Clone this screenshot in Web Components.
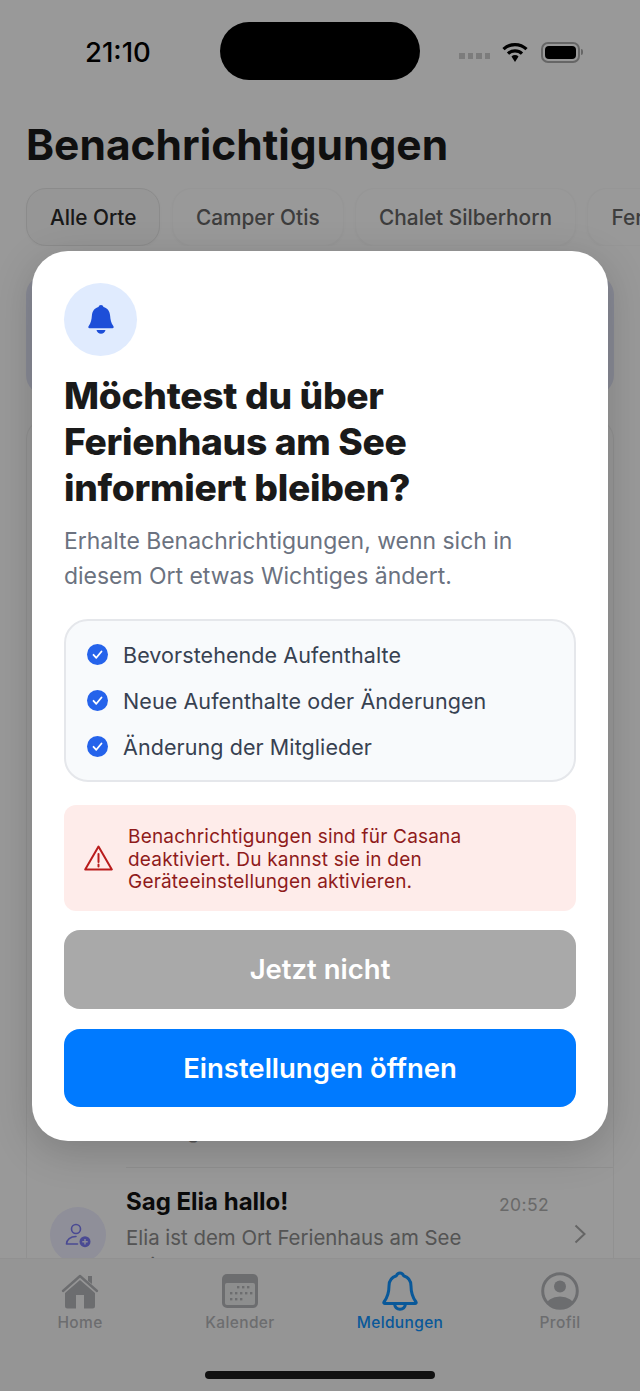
<!DOCTYPE html>
<html lang="de">
<head>
    <meta charset="UTF-8">
    <meta name="viewport" content="width=device-width, initial-scale=1.0">
    <title>Benachrichtigungen</title>
    <style>
        html, body { margin: 0; padding: 0; background: #fff; }
        body { font-family: Inter, "Liberation Sans", sans-serif; }
    </style>
</head>
<body>

    <app-screen>
        <status-bar></status-bar>
        <page-title>Benachrichtigungen</page-title>
        <filter-bar>
            <filter-chip active>Alle Orte</filter-chip>
            <filter-chip>Camper Otis</filter-chip>
            <filter-chip>Chalet Silberhorn</filter-chip>
            <filter-chip>Ferienhaus am See</filter-chip>
        </filter-bar>
        <notification-list>
            <notification-row style="--row-height: 747px" body="Montag"></notification-row>
            <notification-row title="Sag Elia hallo!" time="20:52" body="Elia ist dem Ort Ferienhaus am See beigetreten." icon></notification-row>
        </notification-list>
        <tab-bar slot="tabs">
            <tab-item label="Home" icon="home"></tab-item>
            <tab-item label="Kalender" icon="calendar"></tab-item>
            <tab-item label="Meldungen" icon="bell" active></tab-item>
            <tab-item label="Profil" icon="profile"></tab-item>
        </tab-bar>
        <permission-dialog slot="dialog">
            <span slot="title">Möchtest du über Ferienhaus am See informiert bleiben?</span>
            <span slot="text">Erhalte Benachrichtigungen, wenn sich in diesem Ort etwas Wichtiges ändert.</span>
            <check-item slot="checks">Bevorstehende Aufenthalte</check-item>
            <check-item slot="checks">Neue Aufenthalte oder Änderungen</check-item>
            <check-item slot="checks">Änderung der Mitglieder</check-item>
            <span slot="warning">Benachrichtigungen sind für Casana deaktiviert. Du kannst sie in den Geräteeinstellungen aktivieren.</span>
            <action-button slot="actions" kind="muted">Jetzt nicht</action-button>
            <action-button slot="actions" kind="primary">Einstellungen öffnen</action-button>
        </permission-dialog>
    </app-screen>

    <script>
        const ICONS = {
            home: `<svg width="38" height="36" viewBox="0 0 38 36">
                <path d="M27 3h4v8l-4-3z" fill="currentColor"/>
                <path d="M2 18 19 3l17 15" fill="none" stroke="currentColor" stroke-width="2.4" stroke-linecap="round" stroke-linejoin="round"/>
                <path fill-rule="evenodd" d="M19 7 34 20v13a2.500 2.500 0 0 1-2.500 2.500h-25A2.500 2.500 0 0 1 4 33V20zM15 22v13.500h8V22z" fill="currentColor"/>
            </svg>`,
            calendar: `<svg width="36" height="34" viewBox="0 0 36 34">
                <rect width="36" height="34" rx="5" fill="currentColor"/>
                <rect x="3" y="9" width="30" height="22" rx="2" fill="#eceded"/>
                <g fill="currentColor">
                    <rect x="15" y="12" width="2.400" height="2.400"/><rect x="20" y="12" width="2.400" height="2.400"/><rect x="25" y="12" width="2.400" height="2.400"/>
                    <rect x="8" y="18" width="2.400" height="2.400"/><rect x="13" y="18" width="2.400" height="2.400"/><rect x="18" y="18" width="2.400" height="2.400"/><rect x="23" y="18" width="2.400" height="2.400"/><rect x="28" y="18" width="2.400" height="2.400"/>
                    <rect x="8" y="24" width="2.400" height="2.400"/><rect x="13" y="24" width="2.400" height="2.400"/><rect x="18" y="24" width="2.400" height="2.400"/>
                </g>
            </svg>`,
            bell: `<svg width="36" height="40" viewBox="0 0 36 40" fill="none" stroke="currentColor" stroke-width="3" stroke-linejoin="round">
                <path d="M18 2c2 0 3 1.200 3.600 2.800C26.500 6.300 29 10 29 15c0 8 2 12 5 16 .5.800 0 1.600-.9 1.600H2.900c-.9 0-1.400-.8-.9-1.600 3-4 5-8 5-16 0-5 2.500-8.700 7.400-10.200C15 3.200 16 2 18 2z"/>
                <path d="M12.500 33c.5 3.200 2.800 5.200 5.500 5.200s5-2 5.500-5.200"/>
            </svg>`,
            profile: `<svg width="38" height="38" viewBox="0 0 38 38">
                <defs><clipPath id="c"><circle cx="19" cy="19" r="17"/></clipPath></defs>
                <circle cx="19" cy="14.500" r="6" fill="currentColor"/>
                <ellipse cx="19" cy="34" rx="14" ry="9.500" fill="currentColor" clip-path="url(#c)"/>
                <circle cx="19" cy="19" r="17.300" fill="none" stroke="currentColor" stroke-width="3"/>
            </svg>`
        };

        class AppScreen extends HTMLElement {
            constructor() {
                super();
                this.attachShadow({ mode: 'open' });
                this.shadowRoot.innerHTML = `
                    <style>
                        :host {
                            display: block;
                            position: relative;
                            width: 640px;
                            height: 1391px;
                            overflow: hidden;
                            background: #fff;
                            color: #111;
                        }
                        .page {
                            display: flex;
                            flex-direction: column;
                            height: 100%;
                        }
                        .content {
                            flex: 1;
                            min-height: 0;
                            overflow: hidden;
                        }
                        .overlay {
                            position: absolute;
                            inset: 0;
                            display: flex;
                            align-items: center;
                            justify-content: center;
                            padding: 0 32px;
                            background: rgba(0, 0, 0, 0.4);
                        }
                        .overlay ::slotted(*) { flex: 1; }
                        .island {
                            position: absolute;
                            left: 220px;
                            top: 22px;
                            width: 200px;
                            height: 58px;
                            border-radius: 29px;
                            background: #000;
                        }
                        .indicator {
                            position: absolute;
                            left: 205px;
                            bottom: 12px;
                            width: 230px;
                            height: 8px;
                            border-radius: 4px;
                            background: #111;
                        }
                    </style>
                    <div class="page">
                        <div class="content"><slot></slot></div>
                        <slot name="tabs"></slot>
                    </div>
                    <div class="overlay"><slot name="dialog"></slot></div>
                    <div class="island"></div>
                    <div class="indicator"></div>
                `;
            }
        }

        class StatusBar extends HTMLElement {
            constructor() {
                super();
                this.attachShadow({ mode: 'open' });
                this.shadowRoot.innerHTML = `
                    <style>
                        :host {
                            display: flex;
                            align-items: center;
                            height: 104px;
                            padding-left: 85px;
                            box-sizing: border-box;
                        }
                        .time {
                            font-size: 27.500px;
                            font-weight: 500;
                            color: #000;
                            width: 374px;
                        }
                        .icons { display: flex; align-items: center; }
                        .signal { display: flex; gap: 3px; margin-right: 12px; margin-top: 8px; }
                        .signal i { width: 5.500px; height: 6px; background: #cfcfcf; }
                        .wifi { margin-right: 13px; display: block; }
                        .battery {
                            width: 39px;
                            height: 21px;
                            box-sizing: border-box;
                            border: 2px solid #aaa;
                            border-radius: 7px;
                            padding: 2px;
                        }
                        .battery b { display: block; height: 100%; background: #000; border-radius: 4px; }
                        .nub { width: 2px; height: 6px; background: #aaa; border-radius: 0 2px 2px 0; margin-left: 1px; }
                    </style>
                    <div class="time">21:10</div>
                    <div class="icons">
                        <div class="signal"><i></i><i></i><i></i><i></i></div>
                        <svg class="wifi" width="26" height="20" viewBox="0 0 26 20" fill="none" stroke="#000" stroke-width="3.200">
                            <path d="M1.500 7.200a16.500 16.500 0 0 1 23 0"/>
                            <path d="M6 11.700a10 10 0 0 1 14 0"/>
                            <path d="M9.500 14.500 13 20l3.500-5.500a5 5 0 0 0-7 0z" fill="#000" stroke="none"/>
                        </svg>
                        <div class="battery"><b></b></div>
                        <div class="nub"></div>
                    </div>
                `;
            }
        }

        class PageTitle extends HTMLElement {
            constructor() {
                super();
                this.attachShadow({ mode: 'open' });
                this.shadowRoot.innerHTML = `
                    <style>
                        :host {
                            display: block;
                            padding: 14px 26px 0;
                            font-size: 42.500px;
                            line-height: 54px;
                            font-weight: 700;
                            color: #1a1a1a;
                        }
                    </style>
                    <slot></slot>
                `;
            }
        }

        class FilterBar extends HTMLElement {
            constructor() {
                super();
                this.attachShadow({ mode: 'open' });
                this.shadowRoot.innerHTML = `
                    <style>
                        :host {
                            display: flex;
                            gap: 11.500px;
                            margin-top: 16px;
                            padding-left: 26px;
                            overflow: hidden;
                        }
                    </style>
                    <slot></slot>
                `;
            }
        }

        class FilterChip extends HTMLElement {
            constructor() {
                super();
                this.attachShadow({ mode: 'open' });
                this.shadowRoot.innerHTML = `
                    <style>
                        :host {
                            display: flex;
                            flex: none;
                            align-items: center;
                            height: 58px;
                            box-sizing: border-box;
                            padding: 0 23px;
                            border: 1px solid #fafafa;
                            border-radius: 20px;
                            background: #fff;
                            box-shadow: 0 1px 3px rgba(0, 0, 0, 0.03);
                            font-size: 20.800px;
                            font-weight: 500;
                            color: #666;
                        }
                        :host([active]) {
                            background: #fafafa;
                            border-color: #e8e8e8;
                            color: #2a2a2a;
                        }
                    </style>
                    <slot></slot>
                `;
            }
        }

        class NotificationList extends HTMLElement {
            constructor() {
                super();
                this.attachShadow({ mode: 'open' });
                this.shadowRoot.innerHTML = `
                    <style>
                        :host {
                            display: block;
                            margin: 29px 26px 0;
                        }
                        .banner {
                            height: 120px;
                            border-radius: 20px;
                            background: #e3e6f8;
                        }
                        .card {
                            margin-top: 24px;
                            border: 1px solid #f2f2f2;
                            border-bottom: 0;
                            border-radius: 20px 20px 0 0;
                        }
                    </style>
                    <div class="banner"></div>
                    <div class="card"><slot></slot></div>
                `;
            }
        }

        class NotificationRow extends HTMLElement {
            constructor() {
                super();
                this.attachShadow({ mode: 'open' });
                const title = this.getAttribute('title') || '';
                const time = this.getAttribute('time') || '';
                const body = this.getAttribute('body') || '';
                const icon = this.hasAttribute('icon') ? `
                    <div class="icon">
                        <svg width="30" height="30" viewBox="0 0 30 30" fill="none" stroke="#7c7cf5" stroke-width="1.600">
                            <circle cx="13" cy="9" r="4.500"/>
                            <path d="M3.500 24c0-4.500 4-7.500 9.500-7.500M3.500 24h11" stroke-linecap="round"/>
                            <circle cx="22" cy="21.700" r="5.500" fill="#7c7cf5" stroke="none"/>
                            <path d="M22 19v5.400M19.300 21.700h5.400" stroke="#e8e8ff" stroke-width="1.400"/>
                        </svg>
                    </div>` : '<div class="icon-space"></div>';
                const chevron = this.hasAttribute('icon') ? `
                    <svg class="chevron" width="12" height="20" viewBox="0 0 12 20" fill="none" stroke="#a8a8a8" stroke-width="2">
                        <path d="M1.500 1.500 10.500 10l-9 8.500"/>
                    </svg>` : '';
                this.shadowRoot.innerHTML = `
                    <style>
                        :host {
                            display: flex;
                            align-items: center;
                            min-height: var(--row-height, 132px);
                            padding-left: 23px;
                        }
                        .icon, .icon-space {
                            flex: none;
                            width: 56px;
                            height: 56px;
                            border-radius: 50%;
                            margin-right: 20px;
                            display: flex;
                            align-items: center;
                            justify-content: center;
                        }
                        .icon { background: #eeeeff; }
                        .wrap {
                            position: relative;
                            display: flex;
                            flex: 1;
                            min-width: 0;
                            align-self: stretch;
                        }
                        :host(:not(:first-child)) .wrap { border-top: 1px solid #f0f0f0; }
                        .main {
                            flex: 1;
                            display: flex;
                            flex-direction: column;
                            justify-content: flex-end;
                            min-width: 0;
                            padding: 18px 0 22px;
                        }
                        .head {
                            display: flex;
                            justify-content: space-between;
                            align-items: baseline;
                            line-height: 32px;
                            margin-bottom: 4px;
                            padding-right: 64px;
                        }
                        .title { font-size: 24px; font-weight: 700; color: #111; }
                        .time { font-size: 17.500px; color: #b0b0b0; letter-spacing: .4px; position: relative; top: 1px; }
                        .body {
                            font-size: 20.400px;
                            line-height: 28px;
                            color: #8c8c8c;
                            padding-right: 120px;
                        }
                        .chevron { position: absolute; right: 27px; top: 50%; margin-top: -11px; }
                    </style>
                    ${icon}
                    <div class="wrap">
                        <div class="main">
                            ${title ? `<div class="head"><span class="title">${title}</span><span class="time">${time}</span></div>` : ''}
                            <div class="body">${body}</div>
                        </div>
                        ${chevron}
                    </div>
                `;
            }
        }

        class TabBar extends HTMLElement {
            constructor() {
                super();
                this.attachShadow({ mode: 'open' });
                this.shadowRoot.innerHTML = `
                    <style>
                        :host {
                            display: grid;
                            grid-template-columns: repeat(4, 1fr);
                            height: 133px;
                            box-sizing: border-box;
                            padding-top: 12px;
                            background: #f9f9f9;
                            border-top: 1px solid #f2f2f2;
                        }
                    </style>
                    <slot></slot>
                `;
            }
        }

        class TabItem extends HTMLElement {
            constructor() {
                super();
                this.attachShadow({ mode: 'open' });
                const label = this.getAttribute('label');
                const icon = ICONS[this.getAttribute('icon')];
                this.shadowRoot.innerHTML = `
                    <style>
                        :host {
                            display: flex;
                            flex-direction: column;
                            align-items: center;
                            color: #b5b6ba;
                        }
                        :host([active]) { color: #0f93ff; }
                        .glyph {
                            height: 40px;
                            display: flex;
                            align-items: center;
                            justify-content: center;
                        }
                        .label {
                            margin-top: 1px;
                            font-size: 15.500px;
                            line-height: 22px;
                            font-weight: 450;
                            letter-spacing: .35px;
                        }
                    </style>
                    <div class="glyph">${icon}</div>
                    <div class="label">${label}</div>
                `;
            }
        }

        class PermissionDialog extends HTMLElement {
            constructor() {
                super();
                this.attachShadow({ mode: 'open' });
                this.shadowRoot.innerHTML = `
                    <style>
                        :host {
                            display: block;
                            box-sizing: border-box;
                            margin-top: 1px;
                            padding: 32px 32px 34px;
                            background: #fff;
                            border-radius: 36px;
                            box-shadow: 0 10px 40px rgba(0, 0, 0, 0.18);
                        }
                        .badge {
                            width: 73px;
                            height: 73px;
                            border-radius: 50%;
                            background: #e0ebfe;
                            display: flex;
                            align-items: center;
                            justify-content: center;
                        }
                        h2 {
                            margin: 17px 0 0;
                            max-width: 400px;
                            font-size: 37.200px;
                            line-height: 46px;
                            font-weight: 800;
                            letter-spacing: -0.3px;
                            color: #1a1a1a;
                        }
                        p {
                            margin: 13px 0 0;
                            font-size: 22.950px;
                            line-height: 35px;
                            color: #6b7280;
                        }
                        .checks {
                            margin-top: 25px;
                            padding: 11px 21px 10px;
                            border: 2px solid #e5e7eb;
                            border-radius: 24px;
                            background: #f8fafc;
                        }
                        .warning {
                            margin-top: 23px;
                            display: flex;
                            align-items: center;
                            gap: 15px;
                            padding: 21px 50px 17px 20px;
                            border-radius: 12px;
                            background: #feecea;
                            font-size: 19px;
                            line-height: 22.670px;
                            letter-spacing: .2px;
                            color: #8f1b1b;
                        }
                        .warning svg { flex: none; position: relative; top: -2px; }
                        .actions {
                            margin-top: 19px;
                            display: flex;
                            flex-direction: column;
                            gap: 20px;
                        }
                    </style>
                    <div class="badge">
                        <svg width="26" height="29" viewBox="0 0 26 29" fill="#1d4ed8">
                            <path d="M13 0c1.300 0 2.200.8 2.500 2 4 1.100 6.300 4.300 6.600 8.500.3 4.500 1 7.300 3.200 10.500.7 1 .5 2.300-.8 2.300H1.500C.2 23.300 0 22 .7 21 2.900 17.800 3.600 15 3.900 10.500 4.200 6.300 6.500 3.100 10.500 2 10.800.8 11.700 0 13 0z"/>
                            <path d="M8.500 25h9c-.5 2.200-2.300 3.700-4.500 3.700S9 27.200 8.500 25z"/>
                        </svg>
                    </div>
                    <h2><slot name="title"></slot></h2>
                    <p><slot name="text"></slot></p>
                    <div class="checks"><slot name="checks"></slot></div>
                    <div class="warning">
                        <svg width="29" height="26" viewBox="0 0 29 26" fill="none" stroke="#b91c1c" stroke-width="2" stroke-linejoin="round">
                            <path d="M14.500 1.500 27.800 24.500H1.200z"/>
                            <path d="M14.500 9v8M14.500 19.500v2" stroke-linecap="round"/>
                        </svg>
                        <div><slot name="warning"></slot></div>
                    </div>
                    <div class="actions"><slot name="actions"></slot></div>
                `;
            }
        }

        class CheckItem extends HTMLElement {
            constructor() {
                super();
                this.attachShadow({ mode: 'open' });
                this.shadowRoot.innerHTML = `
                    <style>
                        :host {
                            display: flex;
                            align-items: center;
                            gap: 15px;
                            height: 46px;
                            font-size: 21.500px;
                            letter-spacing: .08px;
                            color: #374151;
                        }
                        svg { flex: none; }
                    </style>
                    <svg width="21" height="21" viewBox="0 0 21 21">
                        <circle cx="10.500" cy="10.500" r="10.500" fill="#2563eb"/>
                        <path d="M6.500 10.800 9.300 13.800 14.500 7.500" fill="none" stroke="#fff" stroke-width="1.800" stroke-linecap="round" stroke-linejoin="round"/>
                    </svg>
                    <span><slot></slot></span>
                `;
            }
        }

        class ActionButton extends HTMLElement {
            constructor() {
                super();
                this.attachShadow({ mode: 'open' });
                this.shadowRoot.innerHTML = `
                    <style>
                        :host {
                            display: flex;
                            align-items: center;
                            justify-content: center;
                            height: 78.500px;
                            border-radius: 16px;
                            font-size: 27.500px;
                            font-weight: 600;
                            color: #fff;
                        }
                        :host([kind="muted"]) { background: #a9a9a9; }
                        :host([kind="primary"]) { background: #007aff; }
                    </style>
                    <slot></slot>
                `;
            }
        }

        customElements.define('app-screen', AppScreen);
        customElements.define('status-bar', StatusBar);
        customElements.define('page-title', PageTitle);
        customElements.define('filter-bar', FilterBar);
        customElements.define('filter-chip', FilterChip);
        customElements.define('notification-list', NotificationList);
        customElements.define('notification-row', NotificationRow);
        customElements.define('tab-bar', TabBar);
        customElements.define('tab-item', TabItem);
        customElements.define('permission-dialog', PermissionDialog);
        customElements.define('check-item', CheckItem);
        customElements.define('action-button', ActionButton);
    </script>

</body>
</html>
